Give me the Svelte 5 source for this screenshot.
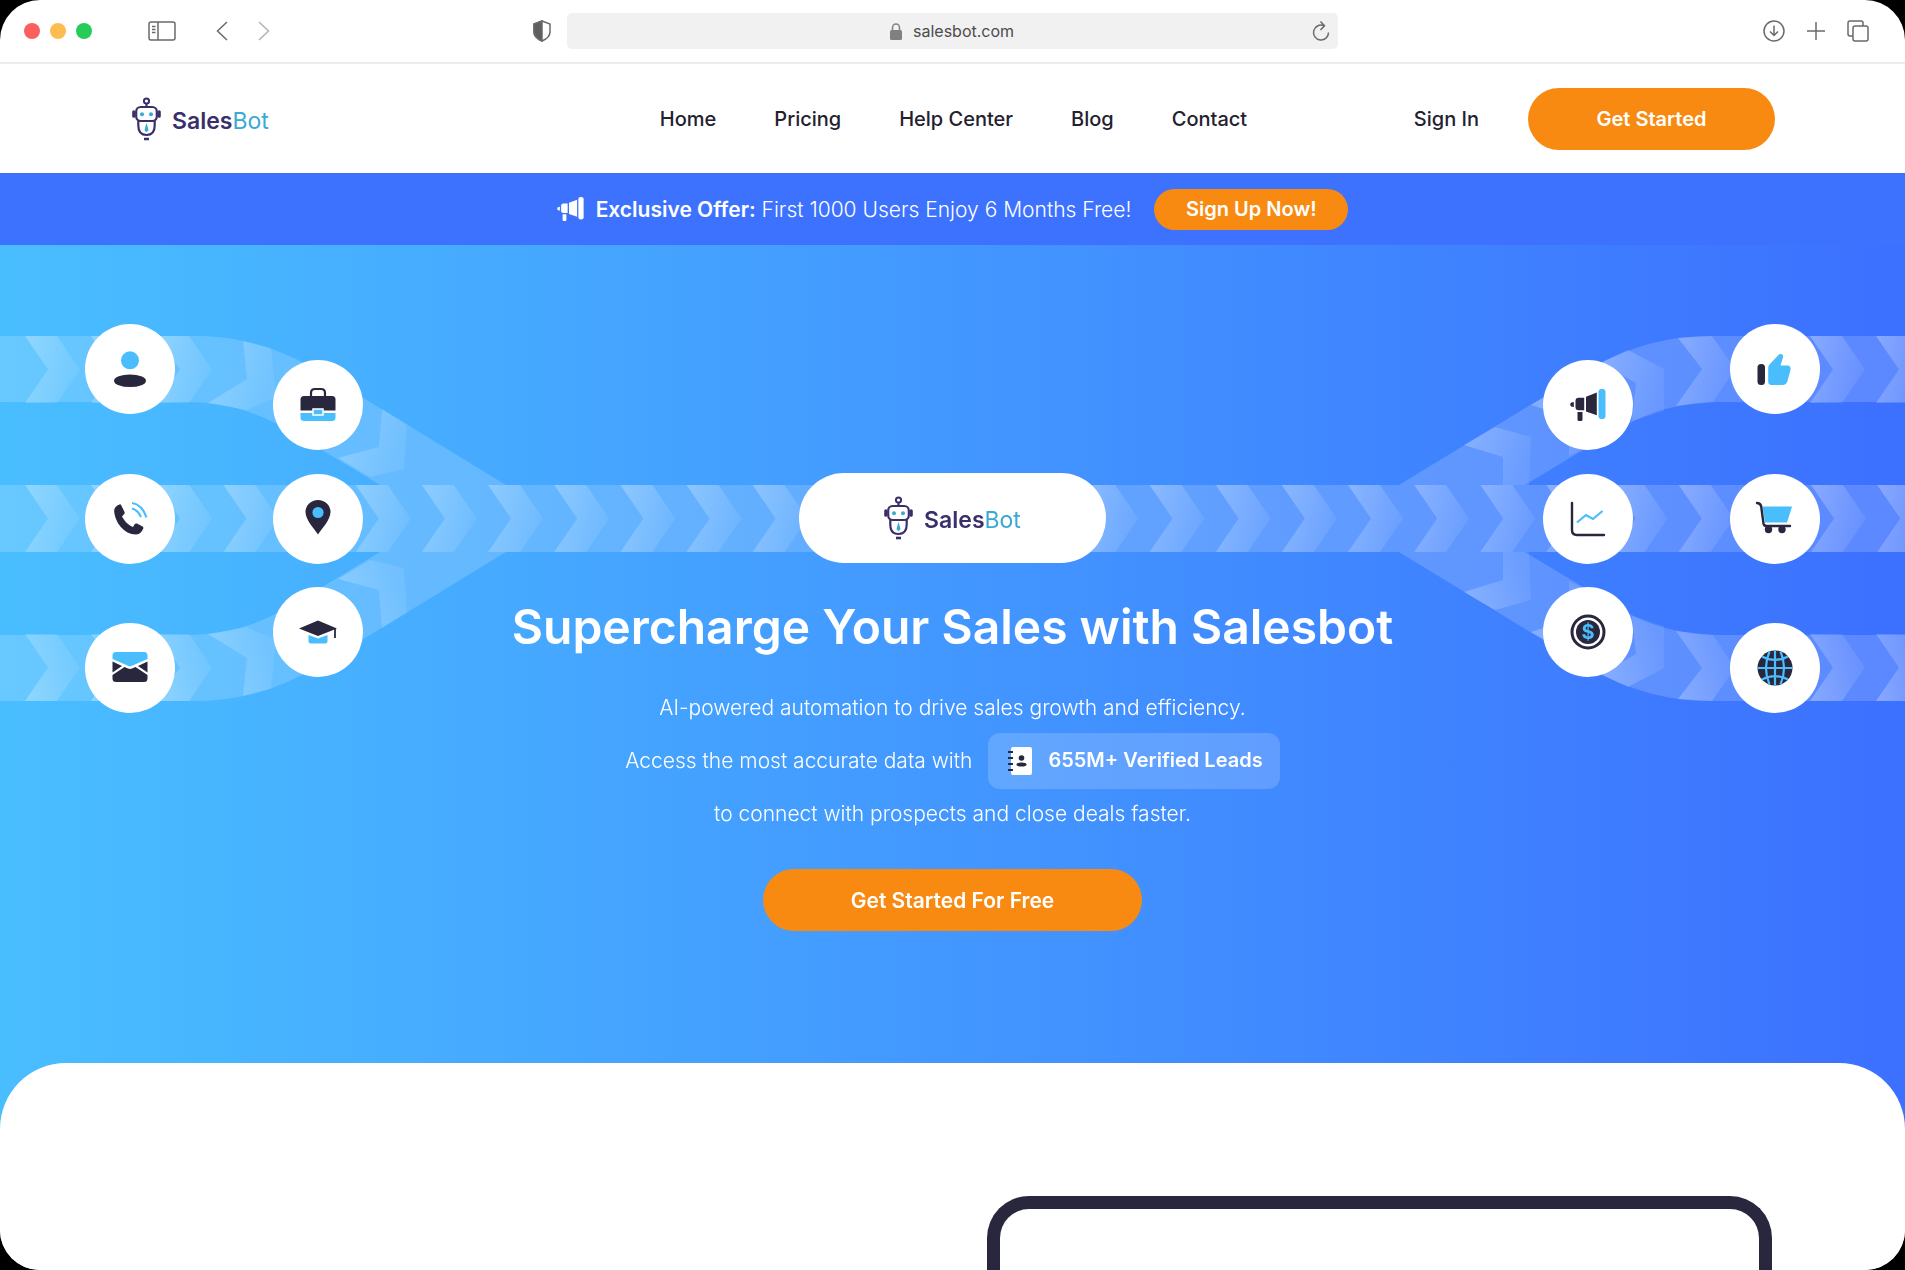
<script>
  const navLinks = ['Home', 'Pricing', 'Help Center', 'Blog', 'Contact'];

  // nodes of the flow diagram, in viewBox units
  const nodes = [
    { icon: 'person', x: 130, y: 124 },
    { icon: 'phone', x: 130, y: 274 },
    { icon: 'mail', x: 130, y: 423 },
    { icon: 'briefcase', x: 318, y: 160 },
    { icon: 'pin', x: 318, y: 274 },
    { icon: 'cap', x: 318, y: 387 },
    { icon: 'megaphone', x: 1588, y: 160 },
    { icon: 'chart', x: 1588, y: 274 },
    { icon: 'dollar', x: 1588, y: 387 },
    { icon: 'thumb', x: 1775, y: 124 },
    { icon: 'cart', x: 1775, y: 274 },
    { icon: 'globe', x: 1775, y: 423 }
  ];

  const chevron = (x, y) => `M${x} ${y}h32l23 33.5l-23 33.5h-32l23 -33.5z`;

  // chevrons that turn with the bend of the outer lanes
  const bends = [
    '243,96 271,103 276,152 247,165 208,158 247,134',
    '382,164 407,179 404,224 370,232 338,213 379,202',
    '1464,200 1495,182 1531,192 1529,240 1503,240 1503,212',
    '1531,160 1562,142 1597,152 1595,198 1569,211 1569,172',
    '1600,118 1628,105 1664,124 1664,166 1632,176 1636,138',
    '1678,93 1712,91 1735,124 1713,157 1676,161 1702,124'
  ];

  const lane =
    'M0 91H195C265 91 310 119 365 154L506 240L506 274H380V240L322 205C273 174 240 157 185 157H0Z';
</script>

{#snippet logo()}
  <span class="logo">
    <svg width="29" height="44" viewBox="0 0 29 44" fill="none" stroke="#3a2f6b" stroke-width="2.2">
      <circle cx="14.5" cy="4" r="2.6" stroke-width="2" />
      <path d="M14.5 6.6v3.4" />
      <rect x="4.2" y="10" width="20.6" height="14" rx="4.5" />
      <path d="M6.3 24v4.5c0 6 3 9.5 8.2 9.5s8.2-3.5 8.2-9.5V24" />
      <path d="M1.8 14.8v4.4M27.2 14.8v4.4" stroke-width="3.2" stroke-linecap="round" />
      <path d="M12 42h5" stroke-width="2.6" />
      <circle cx="10" cy="17.2" r="2" fill="#3ba9d4" stroke="none" />
      <circle cx="19" cy="17.2" r="2" fill="#3ba9d4" stroke="none" />
      <path d="M14.5 26l1.2 4l.8 3.2l-2 2l-2-2l.8-3.2z" fill="#3ba9d4" stroke="none" />
    </svg>
    <span class="logo-text"><b>Sales</b>Bot</span>
  </span>
{/snippet}

{#snippet megaphone(accent)}
  <path d="M-14.2-3v5q-3.6 0-3.6-2.5t3.6-2.500z" />
  <path d="M-12.500-5Q-12-7.300-9.500-7.300H-3.800V5.300H-9.500Q-12 5.300-12.500 3z" />
  <path d="M-2-8.300L8.800-12.500V10.200L-2 6.500z" />
  <path d="M-10.500 7h5v7.500q0 1.500-1.500 1.500h-2q-1.500 0-1.500-1.500z" />
  <rect x="10.500" y="-16" width="7" height="30" rx="3" fill={accent} />
{/snippet}

{#snippet nodeIcon(name)}
  {#if name === 'person'}
    <circle cy="-8.7" r="9" class="accent" />
    <ellipse cy="11.7" rx="16" ry="6.3" />
  {:else if name === 'briefcase'}
    <path d="M-7-9v-3q0-4 4-4h6q4 0 4 4v3" fill="none" stroke="#29273d" stroke-width="2.2" />
    <path d="M-17.5-5.5q0-3.5 3.5-3.5h28q3.500 0 3.500 3.500V5.500h-35z" />
    <path d="M-17.5 8h35v4.500q0 3.500-3.500 3.500h-28q-3.500 0-3.500-3.500z" class="accent" />
    <rect x="-5" y="4" width="10" height="6" class="accent" stroke="#fff" stroke-width="1.5" />
  {:else if name === 'phone'}
    <path
      d="M-10.5-14.5C-13.5-13.5-16-11-15.8-7.5C-15 3-6 15.5 6 15.5C9.5 15.5 12 12.5 13.3 9.5C13.6 8.8 13.3 8 12.6 7.5L7 4.6C6.200 4.200 5.300 4.400 4.800 5.100L3 8C-1.500 6.500-6 1.500-8-2.500L-5.800-5C-5.200-5.700-5.200-6.600-5.600-7.300L-8.800-13.800C-9.200-14.600-9.800-14.800-10.500-14.500Z"
    />
    <path d="M2-16C9-15 14-9 16.5-1.5M2-10.5C6-9.5 9-6.5 11-2" class="accent-line" />
  {:else if name === 'pin'}
    <path d="M0 15.5C-3.5 10-12.5 1-12.5-7A12.5 12 0 1 1 12.5-7C12.5 1 3.5 10 0 15.5Z" />
    <circle cy="-6.5" r="5.6" class="accent" />
  {:else if name === 'cap'}
    <path d="M-19-3.5L0-11.5L19-3.5L0 4z" />
    <path d="M-9.5 3L0 6.5L9.5 3V9q0 2.5-2.5 2.5h-14q-2.5 0-2.5-2.5z" class="accent" />
    <path d="M17-4V6" stroke="#29273d" stroke-width="1.8" />
  {:else if name === 'mail'}
    <path
      d="M-17.5-9v-3.5q0-3.500 3.500-3.500h28q3.500 0 3.500 3.500V-9L2-2.200q-2 1-4 0z"
      class="accent"
    />
    <path d="M-17.5-6.5L-8-2L-17.5 4.5zM17.5-6.5L8-2L17.5 4.5z" />
    <path
      d="M-17.5 7L-5.5-1L-2 .6q2 .8 4 0L5.500-1L17.500 7v3.500q0 3.500-3.500 3.500h-28q-3.500 0-3.500-3.500z"
    />
  {:else if name === 'megaphone'}
    {@render megaphone('#4abdfc')}
  {:else if name === 'chart'}
    <path
      d="M-16-16V11q0 5 5 5H16"
      fill="none"
      stroke="#29273d"
      stroke-width="2.4"
      stroke-linecap="round"
    />
    <path d="M-11 3.500L-2-4L5 0L14.500-8" class="accent-line" />
  {:else if name === 'dollar'}
    <circle r="16" fill="none" stroke="#29273d" stroke-width="3" />
    <circle r="12" />
    <text y="7" class="dollar">$</text>
  {:else if name === 'thumb'}
    <rect x="-17.5" y="-5" width="7.5" height="21" rx="3.5" />
    <path
      d="M-6.8-1.500Q-6.800-3-5.500-4.500L3-13.500C4.500-16 9-15.500 8-11.500L5.500-3.500H12C15-3.500 16-1.500 15.500 1L12.500 12C11.800 14.800 10 16 7.500 16H-3.500C-6 16-6.800 14.500-6.800 12.500Z"
      class="accent"
    />
  {:else if name === 'cart'}
    <path d="M-12.500-12.500H17L12 3.500H-10Z" class="accent" />
    <path
      d="M-18-16q3.600 0 4.200 3.500L-11.500 4.500q.4 2.500 3 2.500H15"
      fill="none"
      stroke="#29273d"
      stroke-width="2.4"
      stroke-linecap="round"
    />
    <circle cx="-6.5" cy="10.5" r="3.7" />
    <circle cx="7" cy="10.5" r="3.7" />
  {:else if name === 'globe'}
    <circle r="17.5" />
    <path
      d="M0-17.500V17.500M-17.500 0H17.500M-5.500-16.500C-10-6-10 6-5.500 16.500M5.500-16.500C10-6 10 6 5.500 16.500M-13-11.500C-5-7 5-7 13-11.500M-13 11.500C-5 7 5 7 13 11.500"
      class="accent-line"
    />
  {/if}
{/snippet}

<div class="window">
  <div class="toolbar">
    <div class="tools">
      <div class="lights"><i class="red"></i><i class="yellow"></i><i class="green"></i></div>
      <button class="tool sidebar" aria-label="Sidebar">
        <svg width="28" height="20" viewBox="0 0 28 20">
          <rect x="1" y="1" width="26" height="18" rx="2" />
          <path d="M10 1v18M4 5.5h3.5M4 8.5h3.5M4 11.5h3.5" />
        </svg>
      </button>
      <button class="tool" aria-label="Back">
        <svg width="12" height="20" viewBox="0 0 12 20"><path d="M11 1L1.5 10L11 19" /></svg>
      </button>
      <button class="tool forward" aria-label="Forward">
        <svg width="12" height="20" viewBox="0 0 12 20"><path d="M1 1L10.5 10L1 19" /></svg>
      </button>
      <button class="tool shield" aria-label="Privacy report">
        <svg width="18" height="22" viewBox="0 0 18 22">
          <path d="M9 1L17 4V12Q17 17.5 9 21Q1 17.5 1 12V4Z" />
          <path d="M9 1V21Q1 17.5 1 12V4Z" fill="#5f5f5f" />
        </svg>
      </button>
    </div>
    <div class="address">
      <svg class="lock" width="12" height="17" viewBox="0 0 12 17">
        <rect y="7" width="12" height="10" rx="1.5" fill="#808080" />
        <path d="M2.5 8V4.5a3.5 3.5 0 0 1 7 0V8" fill="none" stroke="#808080" stroke-width="1.5" />
      </svg>
      <input aria-label="Address" value="salesbot.com" />
      <button class="tool reload" aria-label="Reload">
        <svg width="18" height="22" viewBox="0 0 18 22">
          <path d="M11.5 5.5A7.5 7.5 0 1 0 16.500 12.500M8.500 1.500L12.500 5.800L8.500 10" />
        </svg>
      </button>
    </div>
    <div class="tools right">
      <button class="tool" aria-label="Downloads">
        <svg width="22" height="22" viewBox="0 0 22 22">
          <circle cx="11" cy="11" r="10" />
          <path d="M11 5.5v10M7 11.5l4 4l4-4" />
        </svg>
      </button>
      <button class="tool" aria-label="New tab">
        <svg width="20" height="20" viewBox="0 0 20 20"><path d="M10 1v18M1 10h18" /></svg>
      </button>
      <button class="tool" aria-label="Tabs">
        <svg width="22" height="22" viewBox="0 0 22 22">
          <rect x="6" y="6" width="15" height="15" rx="2" />
          <path d="M6 16H3q-2 0-2-2V3q0-2 2-2h11q2 0 2 2v3" />
        </svg>
      </button>
    </div>
  </div>

  <header>
    {@render logo()}
    <nav>
      {#each navLinks as link}
        <a href="#top">{link}</a>
      {/each}
    </nav>
    <div class="account">
      <a href="#signin">Sign In</a>
      <button class="cta">Get Started</button>
    </div>
  </header>

  <div class="banner">
    <svg width="27" height="26" viewBox="-18 -17 36 34" fill="#fff">{@render megaphone('#fff')}</svg>
    <p><b>Exclusive Offer:</b> First 1000 Users Enjoy 6 Months Free!</p>
    <button class="cta small">Sign Up Now!</button>
  </div>

  <section class="hero">
    <svg class="flow" viewBox="0 0 1905 540" preserveAspectRatio="xMidYMid slice">
      <defs>
        <linearGradient id="shine" x1="0" y1="0" x2="1" y2="0.3">
          <stop offset="0" stop-color="#fff" stop-opacity="0.27" />
          <stop offset="1" stop-color="#fff" stop-opacity="0.08" />
        </linearGradient>
      </defs>
      <g fill="#fff" opacity="0.17">
        <path d={lane} />
        <path d={lane} transform="matrix(1 0 0 -1 0 547)" />
        <path d={lane} transform="matrix(-1 0 0 1 1905 0)" />
        <path d={lane} transform="matrix(-1 0 0 -1 1905 547)" />
        <rect y="240" width="1905" height="67" />
      </g>
      {#each Array(29) as _, i}
        <path d={chevron(25 + i * 66.15, 240)} fill="url(#shine)" />
      {/each}
      {#each ['', 'matrix(1 0 0 -1 0 547)'] as mirror}
        <g fill="url(#shine)" transform={mirror}>
          {#each [25, 91, 157, 1744, 1810, 1876] as x}
            <path d={chevron(x, 91)} />
          {/each}
          {#each bends as points}
            <polygon {points} />
          {/each}
        </g>
      {/each}
      {#each nodes as node}
        <g transform="translate({node.x} {node.y})" fill="#29273d">
          <circle r="45" fill="#fff" />
          {@render nodeIcon(node.icon)}
        </g>
      {/each}
    </svg>

    <div class="hero-content">
      <div class="pill">{@render logo()}</div>
      <h1>Supercharge Your Sales with Salesbot</h1>
      <div class="lead">
        <p>AI-powered automation to drive sales growth and efficiency.</p>
        <p>
          Access the most accurate data with
          <span class="chip">
            <svg width="24" height="28" viewBox="0 0 24 28">
              <rect x="3" width="21" height="28" rx="2" fill="#fff" />
              <path d="M0 5h5M0 11h5M0 17h5M0 23h5" stroke="#29273d" stroke-width="2.2" />
              <circle cx="13.5" cy="11" r="2.8" fill="#29273d" />
              <ellipse cx="13.5" cy="17.5" rx="5" ry="2" fill="#29273d" />
            </svg>
            655M+ Verified Leads
          </span>
        </p>
        <p>to connect with prospects and close deals faster.</p>
      </div>
      <button class="cta wide">Get Started For Free</button>
    </div>
  </section>

  <section class="showcase">
    <div class="device"></div>
  </section>
</div>

<style>
  :global(body) {
    background: #000;
  }

  .window {
    display: flex;
    flex-direction: column;
    height: 100vh;
    overflow: hidden;
    border-radius: 40px;
    background: #fff;
    color: #23212f;
    font-family: Inter, 'Liberation Sans', sans-serif;
    font-size: 20px;
  }

  a {
    color: inherit;
    text-decoration: none;
    font-weight: 500;
  }

  p {
    margin: 0;
  }

  button {
    border: 0;
    padding: 0;
    font: inherit;
    cursor: pointer;
  }

  /* browser toolbar */
  .toolbar {
    display: grid;
    grid-template-columns: 1fr minmax(0, 771px) 1fr;
    align-items: center;
    flex: none;
    height: 62px;
    border-bottom: 2px solid #ececec;
  }

  .tools {
    display: flex;
    align-items: center;
    padding: 0 16px 0 24px;
  }

  .tools.right {
    justify-content: flex-end;
    gap: 21px;
    padding-right: 36px;
  }

  .lights {
    display: flex;
    gap: 10px;
    margin-right: 56px;
  }

  .lights i {
    width: 16px;
    height: 16px;
    border-radius: 50%;
  }

  .red {
    background: #fc605c;
  }

  .yellow {
    background: #fdbc50;
  }

  .green {
    background: #27cb57;
  }

  .tool {
    display: flex;
    background: none;
  }

  .tool svg {
    fill: none;
    stroke: #6a6a6a;
    stroke-width: 1.5;
  }

  .sidebar {
    margin-right: 40px;
  }

  .forward {
    margin-left: 30px;
    opacity: 0.5;
  }

  .shield {
    margin-left: auto;
  }

  .address {
    position: relative;
    display: flex;
    align-items: center;
    justify-content: center;
    gap: 11px;
    height: 36px;
    border-radius: 5px;
    background: #f1f1f1;
  }

  .address input {
    width: 102px;
    padding: 0;
    border: 0;
    outline: 0;
    background: none;
    color: #4c4c4c;
    font: inherit;
    font-size: 16px;
  }

  .reload {
    position: absolute;
    right: 8px;
  }

  /* site header */
  header {
    display: grid;
    grid-template-columns: 1fr auto 1fr;
    align-items: center;
    flex: none;
    height: 109px;
    padding: 0 130px 0 132px;
  }

  .logo {
    display: flex;
    align-items: center;
    gap: 11px;
  }

  .logo-text {
    color: #3ba9d4;
    font-size: 23px;
    line-height: 24px;
    padding-top: 4px;
  }

  .logo-text b {
    color: #3a2f6b;
    font-weight: 600;
  }

  nav {
    display: flex;
    gap: 58px;
  }

  .account {
    display: flex;
    align-items: center;
    justify-content: flex-end;
    gap: 49px;
  }

  .cta {
    width: 247px;
    height: 62px;
    border-radius: 31px;
    background: #f88a12;
    color: #fff;
    font-weight: 600;
  }

  .cta.small {
    width: 194px;
    height: 41px;
  }

  .cta.wide {
    width: 379px;
    margin-top: 29px;
    font-size: 21px;
  }

  .banner {
    display: flex;
    align-items: center;
    justify-content: center;
    flex: none;
    height: 72px;
    background: #3d72ff;
    color: #fff;
    font-weight: 300;
  }

  .banner b {
    font-weight: 600;
  }

  .banner p {
    margin: 0 23px 0 12px;
    font-size: 21px;
  }

  /* hero */
  .hero {
    position: relative;
    flex: none;
    padding: 228px 0 198px;
    background: linear-gradient(90deg, #49beff, #3c70ff);
    color: #fff;
  }

  .flow {
    position: absolute;
    top: 0;
    left: 0;
    width: 100%;
    height: 540px;
  }

  .accent {
    fill: #4abdfc;
  }

  .accent-line {
    fill: none;
    stroke: #4abdfc;
    stroke-width: 2.2;
  }

  .dollar {
    fill: #4abdfc;
    font-size: 20px;
    font-weight: 700;
    text-anchor: middle;
  }

  .hero-content {
    position: relative;
    display: flex;
    flex-direction: column;
    align-items: center;
  }

  .pill {
    display: flex;
    align-items: center;
    justify-content: center;
    width: 307px;
    height: 90px;
    border-radius: 45px;
    background: #fff;
  }

  h1 {
    margin: 32px 0 22px;
    font-size: 48px;
    font-weight: 600;
    line-height: 64px;
  }

  .lead {
    font-size: 21px;
    font-weight: 300;
    line-height: 53px;
  }

  .lead p {
    display: flex;
    align-items: center;
    justify-content: center;
    gap: 16px;
    height: 53px;
  }

  .chip {
    display: flex;
    align-items: center;
    gap: 16px;
    height: 56px;
    padding: 0 17px 0 20px;
    border-radius: 12px;
    background: rgba(255, 255, 255, 0.17);
    font-size: 20px;
    font-weight: 600;
  }

  .showcase {
    position: relative;
    display: grid;
    grid-template-columns: 1fr 1fr;
    flex: 1;
    gap: 69px;
    margin-top: -66px;
    padding: 133px 133px 0;
    border-radius: 66px 66px 0 0;
    background: #fff;
  }

  .device {
    grid-column: 2;
    border: 13px solid #29273d;
    border-bottom: 0;
    border-radius: 42px 42px 0 0;
  }
</style>
